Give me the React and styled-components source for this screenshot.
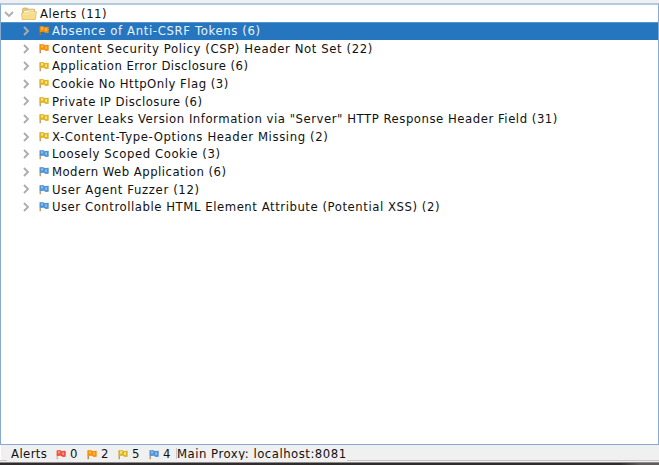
import React from "react";
import styled, { createGlobalStyle } from "styled-components";

const GlobalStyle = createGlobalStyle`
  * { box-sizing: border-box; }
  body { margin: 0; overflow: hidden; background: #f0f0f0; }
`;

const Window = styled.main`
  width: 659px;
  height: 465px;
  display: flex;
  flex-direction: column;
  background: #f0f0f0;
  color: #111;
  font: 11.7px/15px "DejaVu Sans", sans-serif;
  white-space: pre;
`;

const TreePane = styled.section`
  height: 442px;
  margin-top: 3px;
  border: 1px solid #86abd3;
  border-top: 2px solid #b0cce3;
  background: #fff;
`;

const Row = styled.div`
  height: ${(p) => (p.$root ? 17.2 : 17.6)}px;
  display: flex;
  align-items: center;
  padding-left: ${(p) => (p.$root ? 3 : 20)}px;
  background: ${(p) => (p.$selected ? "#2675bf" : "transparent")};
  color: ${(p) => (p.$selected ? "#e9f3fc" : "#111")};
  box-shadow: ${(p) => (p.$selected ? "inset 0 1px #5593cb" : "none")};
`;

const Label = styled.span`
  margin-left: ${(p) => (p.$root ? 3 : 3.4)}px;
  padding-top: 1.6px;
  letter-spacing: ${(p) => p.$spacing || 0}px;
`;

const Chevron = styled.svg`
  flex: none;
  width: 10px;
  height: 10px;
  fill: none;
  stroke: #adadad;
  stroke-width: 1.9;
`;

const FolderSvg = styled.svg`
  flex: none;
  width: 16px;
  height: 14px;
  margin-left: 7px;
`;

const FlagSvg = styled.svg`
  flex: none;
  width: 10px;
  height: 11px;
  margin-left: ${(p) => p.$gap || 0}px;
`;

const StatusBar = styled.footer`
  height: 15px;
  padding: 2px 0 0 10px;
  display: flex;
  align-items: center;
  border-left: 1px solid #fff;
`;

const StatusLabel = styled.span`
  width: 45px;
  padding-top: 2px;
  letter-spacing: 0.4px;
`;

const Counter = styled.span`
  width: 31px;
  padding-top: 2px;
  display: flex;
  align-items: center;
  gap: 4px;
`;

const Proxy = styled.span`
  margin-left: -4px;
  padding: 2px 0 0 1px;
  background: linear-gradient(#c4c4c4, #c4c4c4) 0 3px / 1px 11px no-repeat;
  letter-spacing: 0.5px;
`;

const BottomEdge = styled.div`
  flex: 1;
  background:
    linear-gradient(#c5c8c4, #c5c8c4) 0 0 / 7px 1px no-repeat,
    linear-gradient(#c5c8c4, #c5c8c4) 347px 0 / 312px 1px no-repeat,
    linear-gradient(#f0f0f0 0 2px, #8d8989 2px 3px, transparent 3px),
    linear-gradient(90deg, #302b2c 0 620px, #5f5c5a 640px);
`;

const palettes = {
  red: ["#ee5140", "#fa9580", "#dda88b"],
  orange: ["#f4920f", "#ffb944", "#bb7420"],
  yellow: ["#deb42a", "#ffe675", "#b98942"],
  blue: ["#5193d5", "#8abded", "#b5834e"],
};

function Flag({ color, gap }) {
  const [main, light, pole] = palettes[color];
  return (
    <FlagSvg $gap={gap} viewBox="0 0 10 11">
      <path d="M1.2 1.3v9" stroke={pole} strokeWidth="1.2" />
      <path d="M.8 1.4 4 1l1.5 1 4.2-.3v6L6.8 8.1 4.7 6.8.8 7.1Z" fill={main} />
      <path d="M2 2.2h2.2v2.3H2zM6.2 3.2h1.8v2.7H6.2z" fill={light} />
    </FlagSvg>
  );
}

function Folder() {
  return (
    <FolderSvg viewBox="0 0 16 14">
      <path d="M1.5 12V2.2L2.3 1h4l1 1.2h6.2V12Z" fill="#e9c873" stroke="#ceaa60" strokeWidth=".7" />
      <path d="M3 4.2 12.5 3v3H3Z" fill="#fff6d8" />
      <path d="M.5 6h7l1.2-1.2h6.8L14.3 12.5H1.2Z" fill="#f7dc8b" stroke="#d8b766" strokeWidth=".7" />
      <path d="M1.4 7h6.7l1.2-1.2h5" fill="none" stroke="#fff0b9" strokeWidth=".8" />
    </FolderSvg>
  );
}

const alerts = [
  ["orange", "Absence of Anti-CSRF Tokens (6)", 0.62],
  ["orange", "Content Security Policy (CSP) Header Not Set (22)", 0.59],
  ["yellow", "Application Error Disclosure (6)", 0.46],
  ["yellow", "Cookie No HttpOnly Flag (3)", 0.49],
  ["yellow", "Private IP Disclosure (6)", 0.45],
  ["yellow", 'Server Leaks Version Information via "Server" HTTP Response Header Field (31)', 0.525],
  ["yellow", "X-Content-Type-Options Header Missing (2)", 0.61],
  ["blue", "Loosely Scoped Cookie (3)", 0.57],
  ["blue", "Modern Web Application (6)", 0.47],
  ["blue", "User Agent Fuzzer (12)", 0.62],
  ["blue", "User Controllable HTML Element Attribute (Potential XSS) (2)", 0.545],
];

const counters = [["red", 0], ["orange", 2], ["yellow", 5], ["blue", 4]];

export default function App() {
  return (
    <>
      <GlobalStyle />
      <Window>
        <TreePane>
          <Row $root>
            <Chevron viewBox="0 0 10 10"><path d="m1 3 4 4 4-4" /></Chevron>
            <Folder />
            <Label $root $spacing={0.5}>Alerts (11)</Label>
          </Row>
          {alerts.map(([color, text, spacing], i) => (
            <Row key={text} $selected={i === 0}>
              <Chevron viewBox="0 0 10 10"><path d="m3 1 4 4-4 4" /></Chevron>
              <Flag color={color} gap={7.5} />
              <Label $spacing={spacing}>{text}</Label>
            </Row>
          ))}
        </TreePane>
        <StatusBar>
          <StatusLabel>Alerts</StatusLabel>
          {counters.map(([color, count]) => (
            <Counter key={color}><Flag color={color} />{count}</Counter>
          ))}
          <Proxy>Main Proxy: localhost:8081</Proxy>
        </StatusBar>
        <BottomEdge />
      </Window>
    </>
  );
}
